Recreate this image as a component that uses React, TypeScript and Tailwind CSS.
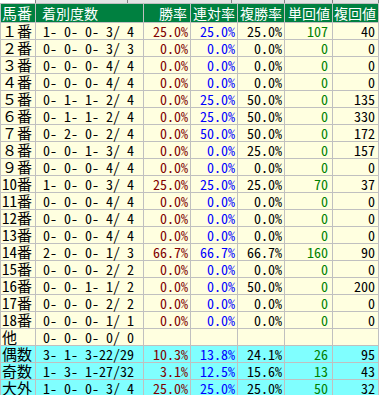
type Row = {
  no: string;
  rec: string;
  win: string;
  ren: string;
  fuku: string;
  tan: string;
  fk: string;
  hl?: boolean;
};

const rows: Row[] = [
  { no: "１番", rec: "1- 0- 0- 3/ 4", win: "25.0%", ren: "25.0%", fuku: "25.0%", tan: "107", fk: "40" },
  { no: "２番", rec: "0- 0- 0- 3/ 3", win: "0.0%", ren: "0.0%", fuku: "0.0%", tan: "0", fk: "0" },
  { no: "３番", rec: "0- 0- 0- 4/ 4", win: "0.0%", ren: "0.0%", fuku: "0.0%", tan: "0", fk: "0" },
  { no: "４番", rec: "0- 0- 0- 4/ 4", win: "0.0%", ren: "0.0%", fuku: "0.0%", tan: "0", fk: "0" },
  { no: "５番", rec: "0- 1- 1- 2/ 4", win: "0.0%", ren: "25.0%", fuku: "50.0%", tan: "0", fk: "135" },
  { no: "６番", rec: "0- 1- 1- 2/ 4", win: "0.0%", ren: "25.0%", fuku: "50.0%", tan: "0", fk: "330" },
  { no: "７番", rec: "0- 2- 0- 2/ 4", win: "0.0%", ren: "50.0%", fuku: "50.0%", tan: "0", fk: "172" },
  { no: "８番", rec: "0- 0- 1- 3/ 4", win: "0.0%", ren: "0.0%", fuku: "25.0%", tan: "0", fk: "157" },
  { no: "９番", rec: "0- 0- 0- 4/ 4", win: "0.0%", ren: "0.0%", fuku: "0.0%", tan: "0", fk: "0" },
  { no: "10番", rec: "1- 0- 0- 3/ 4", win: "25.0%", ren: "25.0%", fuku: "25.0%", tan: "70", fk: "37" },
  { no: "11番", rec: "0- 0- 0- 4/ 4", win: "0.0%", ren: "0.0%", fuku: "0.0%", tan: "0", fk: "0" },
  { no: "12番", rec: "0- 0- 0- 4/ 4", win: "0.0%", ren: "0.0%", fuku: "0.0%", tan: "0", fk: "0" },
  { no: "13番", rec: "0- 0- 0- 4/ 4", win: "0.0%", ren: "0.0%", fuku: "0.0%", tan: "0", fk: "0" },
  { no: "14番", rec: "2- 0- 0- 1/ 3", win: "66.7%", ren: "66.7%", fuku: "66.7%", tan: "160", fk: "90" },
  { no: "15番", rec: "0- 0- 0- 2/ 2", win: "0.0%", ren: "0.0%", fuku: "0.0%", tan: "0", fk: "0" },
  { no: "16番", rec: "0- 0- 1- 1/ 2", win: "0.0%", ren: "0.0%", fuku: "50.0%", tan: "0", fk: "200" },
  { no: "17番", rec: "0- 0- 0- 2/ 2", win: "0.0%", ren: "0.0%", fuku: "0.0%", tan: "0", fk: "0" },
  { no: "18番", rec: "0- 0- 0- 1/ 1", win: "0.0%", ren: "0.0%", fuku: "0.0%", tan: "0", fk: "0" },
  { no: "他", rec: "0- 0- 0- 0/ 0", win: "", ren: "", fuku: "", tan: "", fk: "" },
  { no: "偶数", rec: "3- 1- 3-22/29", win: "10.3%", ren: "13.8%", fuku: "24.1%", tan: "26", fk: "95", hl: true },
  { no: "奇数", rec: "1- 3- 1-27/32", win: "3.1%", ren: "12.5%", fuku: "15.6%", tan: "13", fk: "43", hl: true },
  { no: "大外", rec: "1- 0- 0- 3/ 4", win: "25.0%", ren: "25.0%", fuku: "25.0%", tan: "50", fk: "32", hl: true },
];

const cols = "grid grid-cols-[34px_107px_46px_46px_46px_47px_45px] gap-px";

export default function App() {
  return (
    <div
      className="w-[380px] h-[395px] overflow-hidden bg-white text-[14px] leading-[16px]"
      style={{ fontFamily: '"Noto Sans Mono CJK JP", "Noto Sans CJK JP", monospace' }}
    >
      {/* cut-off buttons above the table */}
      <div className="flex h-[3px] bg-white">
        <div className="w-[35px]" />
        <div className="w-[93px] border-x border-[#808080] bg-[#e4e4e4]" />
        <div className="w-[104px] border-r border-[#808080] bg-[#e4e4e4]" />
        <div className="w-[53px] border-r border-[#808080] bg-[#e4e4e4]" />
        <div className="w-[48px] border-r border-[#808080] bg-[#e4e4e4]" />
        <div className="w-[46px] border-r border-[#808080] bg-[#e4e4e4]" />
      </div>

      <div className={`${cols} w-fit border border-[#c0c0c0] bg-[#c0c0c0]`}>
        {/* header */}
        <div className="h-[18px] bg-[#008040] pl-[1px] pt-[1px] text-[15px] text-white">馬番</div>
        <div className="h-[18px] bg-[#008040] pl-[6px] pt-[1px] text-white">着別度数</div>
        <div className="h-[18px] bg-[#008040] pr-[3px] pt-[1px] text-right text-white">勝率</div>
        <div className="h-[18px] bg-[#008040] pr-[2px] pt-[1px] text-right text-white">連対率</div>
        <div className="h-[18px] bg-[#008040] pr-[2px] pt-[1px] text-right text-white">複勝率</div>
        <div className="h-[18px] bg-[#008040] pr-[2px] pt-[1px] text-right text-white">単回値</div>
        <div className="h-[18px] bg-[#008040] pr-[2px] pt-[1px] text-right text-white">複回値</div>

        {rows.map((r) => {
          const bg = r.hl ? "bg-[#80ffff]" : "bg-[#ffffe0]";
          return [
            <div key={r.no + "a"} className={`${bg} h-[16px] pl-[1px] text-[15px] text-black`}>{r.no}</div>,
            <div key={r.no + "b"} className={`${bg} h-[16px] pl-[7px] whitespace-pre text-black`}>{r.rec}</div>,
            <div key={r.no + "c"} className={`${bg} h-[16px] pr-[2px] text-right text-[#800000]`}>{r.win}</div>,
            <div key={r.no + "d"} className={`${bg} h-[16px] pr-[2px] text-right text-[#0000ff]`}>{r.ren}</div>,
            <div key={r.no + "e"} className={`${bg} h-[16px] pr-[2px] text-right text-black`}>{r.fuku}</div>,
            <div key={r.no + "f"} className={`${bg} h-[16px] pr-[4px] text-right text-[#008000]`}>{r.tan}</div>,
            <div key={r.no + "g"} className={`${bg} h-[16px] pr-[3px] text-right text-black`}>{r.fk}</div>,
          ];
        })}
      </div>
    </div>
  );
}
